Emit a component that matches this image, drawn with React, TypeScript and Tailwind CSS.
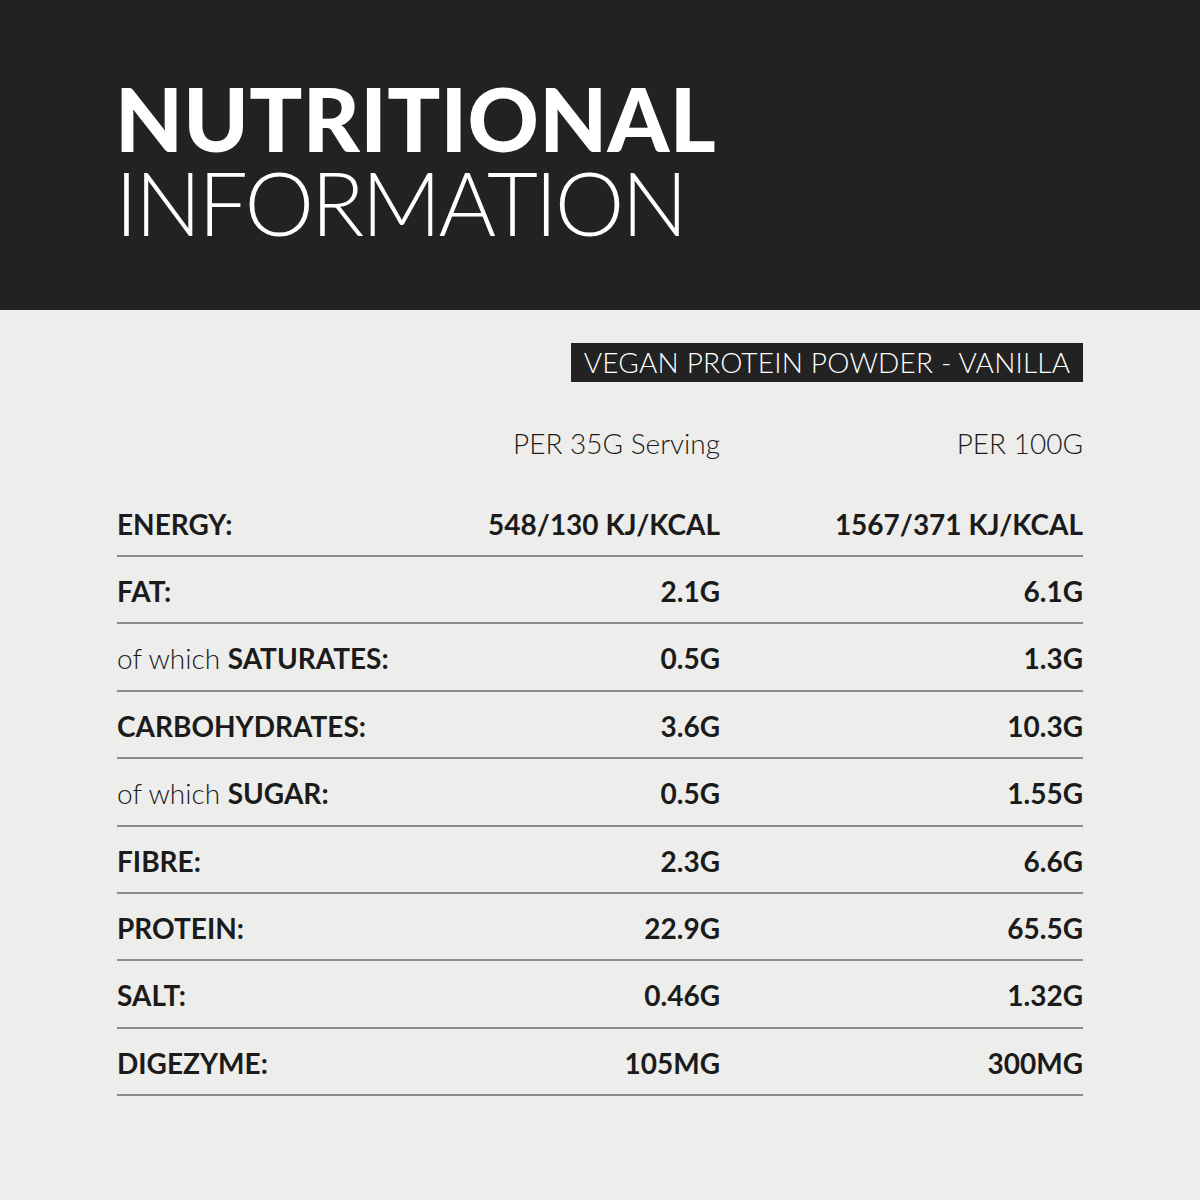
const ROWS: { pre?: string; label: string; a: string; b: string }[] = [
  { label: "ENERGY:", a: "548/130 KJ/KCAL", b: "1567/371 KJ/KCAL" },
  { label: "FAT:", a: "2.1G", b: "6.1G" },
  { pre: "of which ", label: "SATURATES:", a: "0.5G", b: "1.3G" },
  { label: "CARBOHYDRATES:", a: "3.6G", b: "10.3G" },
  { pre: "of which ", label: "SUGAR:", a: "0.5G", b: "1.55G" },
  { label: "FIBRE:", a: "2.3G", b: "6.6G" },
  { label: "PROTEIN:", a: "22.9G", b: "65.5G" },
  { label: "SALT:", a: "0.46G", b: "1.32G" },
  { label: "DIGEZYME:", a: "105MG", b: "300MG" },
];

export default function App() {
  return (
    <div className="w-[1200px] h-[1200px] bg-[#ededeb] text-[#1b1b1b] font-['Lato','Liberation_Sans',sans-serif]">
      {/* header */}
      <div className="h-[310px] bg-[#222222] px-[115px] pt-[74px] text-white">
        <div className="text-[88px] font-black leading-[88px] tracking-[0.3px]">NUTRITIONAL</div>
        <div className="text-[88px] font-light leading-[80px] tracking-[-3px]">INFORMATION</div>
      </div>

      <div className="px-[117px]">
        <div className="flex justify-end pt-[33px]">
          <div className="h-[39px] w-[512px] bg-[#222222] flex items-center justify-center text-white text-[28px] leading-[39px] font-light tracking-[0.2px]">
            VEGAN PROTEIN POWDER - VANILLA
          </div>
        </div>

        <div className="grid grid-cols-[1fr_300px_363px] mt-[41px] text-[28px] leading-[40px] font-light">
          <div />
          <div className="text-right">PER 35G Serving</div>
          <div className="text-right">PER 100G</div>
        </div>

        <div className="mt-[41px]">
          {ROWS.map((r, i) => (
            <div
              key={i}
              className={`grid grid-cols-[1fr_300px_363px] border-b-2 border-[#8a8a8a] text-[28px] leading-[40px] ${
                i === 0 ? "pb-[11px]" : "pt-[14px] pb-[11.4px]"
              }`}
            >
              <div>
                {r.pre && <span className="font-light">{r.pre}</span>}
                <span className="font-bold">{r.label}</span>
              </div>
              <div className="text-right font-bold">{r.a}</div>
              <div className="text-right font-bold">{r.b}</div>
            </div>
          ))}
        </div>
      </div>
    </div>
  );
}
